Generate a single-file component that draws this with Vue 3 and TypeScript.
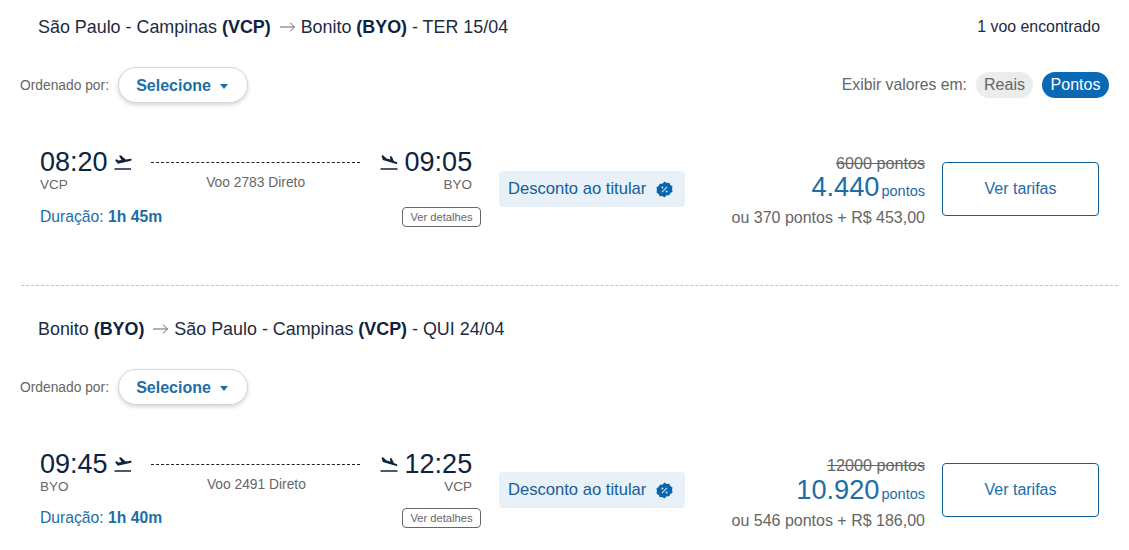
<script setup lang="ts">
interface Leg {
  from: string; fromCode: string; to: string; toCode: string; day: string;
  dep: string; arr: string; flight: string; dur: string;
  old: string; price: string; mix: string; found: boolean;
}
const legs: Leg[] = [
  { from: 'São Paulo - Campinas', fromCode: 'VCP', to: 'Bonito', toCode: 'BYO', day: 'TER 15/04', dep: '08:20', arr: '09:05', flight: 'Voo 2783 Direto', dur: '1h 45m', old: '6000 pontos', price: '4.440', mix: 'ou 370 pontos + R$ 453,00', found: true },
  { from: 'Bonito', fromCode: 'BYO', to: 'São Paulo - Campinas', toCode: 'VCP', day: 'QUI 24/04', dep: '09:45', arr: '12:25', flight: 'Voo 2491 Direto', dur: '1h 40m', old: '12000 pontos', price: '10.920', mix: 'ou 546 pontos + R$ 186,00', found: false },
]
</script>

<template>
  <main class="page">
    <template v-for="(l, i) in legs" :key="i">
      <hr v-if="i > 0" class="rule" />
      <section class="leg" :class="i === 0 ? 'leg-first' : 'leg-next'">
        <header class="head">
          <h2 class="title">
            {{ l.from }} <b>({{ l.fromCode }})</b>
            <svg class="arrow" viewBox="0 0 16 12" width="16" height="12"><path d="M0 6h14.500M10 1.500 14.500 6 10 10.500" fill="none" stroke="#5f6670" stroke-width="1"/></svg>
            {{ l.to }} <b>({{ l.toCode }})</b> - {{ l.day }}
          </h2>
          <span v-if="l.found" class="found">1 voo encontrado</span>
        </header>

        <div class="tools">
          <span class="sort-label">Ordenado por:</span>
          <button class="select">Selecione <i class="caret"></i></button>
          <div v-if="l.found" class="units">
            <span class="units-label">Exibir valores em:</span>
            <span class="pill pill-off">Reais</span>
            <span class="pill pill-on">Pontos</span>
          </div>
        </div>

        <div class="flight">
          <div class="route">
            <div class="times">
              <span class="time">{{ l.dep }}</span>
              <svg class="plane plane-dep" viewBox="0 0 18 15" width="18" height="15"><path d="M.5 14H17" stroke="#0d2340" stroke-width="1.500"/><path d="M1 5 2.500 4.300l2 1.300 3-.5L5 .7 6.800.3l4.900 4.200 3.800-.6c1.200-.2 2 .3 2.100.9.100.6-.5 1.100-1.600 1.300L3.800 8.700z" fill="#0d2340"/></svg>
              <span class="dash"></span>
              <svg class="plane plane-arr" viewBox="0 0 18 15" width="18" height="15"><path d="M.5 14H17.500" stroke="#0d2340" stroke-width="1.500"/><path d="M1.500.5 3 .2l3.600 3.400 3.800 1L10 1l1.800.5 2 4.600 2.500.9c.9.400 1.200 1 1 1.400-.2.500-.9.600-1.800.4L2.800 5z" fill="#0d2340"/></svg>
              <span class="time">{{ l.arr }}</span>
            </div>
            <div class="codes">
              <span>{{ l.fromCode }}</span>
              <span class="flight-no">{{ l.flight }}</span>
              <span>{{ l.toCode }}</span>
            </div>
            <div class="meta">
              <span class="dur">Duração: <b>{{ l.dur }}</b></span>
              <span class="details">Ver detalhes</span>
            </div>
          </div>

          <div class="discount">
            Desconto ao titular
            <svg class="seal" viewBox="0 0 18 18" width="17" height="17">
              <path d="M9 .5l2.300 1.500 2.700-.2 1.200 2.500 2.300 1.400-.5 2.800.5 2.800-2.300 1.400-1.200 2.500-2.700-.2L9 17.500 6.700 16l-2.700.2-1.200-2.500L.5 12.300 1 9.500.5 6.700l2.300-1.400L4 2.800l2.700.2z" fill="#0a64ad"/>
              <path d="M6.300 11.700l5.400-5.400" stroke="#cfe2f2" stroke-width="1.200"/>
              <circle cx="6.700" cy="6.900" r="1.100" fill="#cfe2f2"/><circle cx="11.300" cy="11.100" r="1.100" fill="#cfe2f2"/>
            </svg>
          </div>

          <div class="price">
            <s class="old">{{ l.old }}</s>
            <div class="now"><span class="amount">{{ l.price }}</span><span class="unit">pontos</span></div>
            <div class="mix">{{ l.mix }}</div>
          </div>

          <button class="fares">Ver tarifas</button>
        </div>
      </section>
    </template>
  </main>
</template>

<style>
body { margin: 0; background: #fff; }
</style>

<style scoped>
.page { width: 1129px; height: 550px; overflow: hidden; box-sizing: border-box; padding: 0 10px 0 20px; font-family: "Liberation Sans", Arial, sans-serif; color: #0d2340; }
.leg-first { height: 285px; box-sizing: border-box; padding-top: 16px; }
.leg-next { padding-top: 32px; }
.rule { height: 0; margin: 0 1px; border: 0; border-top: 1px dashed #c4c4c4; }
.head { display: flex; justify-content: space-between; align-items: center; height: 22px; padding: 0 19px 0 18px; }
.title { margin: 0; font-size: 17.900px; font-weight: 400; white-space: nowrap; color: #1c2b3f; }
.title b { color: #0d2340; }
.arrow { margin: 0 0 0 9px; vertical-align: -0.500px; }
.found { font-size: 15.900px; color: #1c2b3f; }
.tools { display: flex; align-items: center; height: 36px; margin-top: 29px; padding-right: 10px; }
.sort-label { font-size: 13.800px; color: #666; margin-right: 9px; }
.select { width: 130px; height: 36px; box-sizing: border-box; border: 1px solid #d4d6da; border-radius: 18px; background: #fff; box-shadow: 0 2px 4px rgba(0,0,0,.16); color: #1b6ea8; font: 700 16px "Liberation Sans", Arial, sans-serif; display: flex; align-items: center; justify-content: center; gap: 9px; padding: 2px 2px 0 0; }
.caret { width: 0; height: 0; border-left: 4px solid transparent; border-right: 4px solid transparent; border-top: 5px solid #1b6ea8; margin-top: 1px; }
.units { margin-left: auto; display: flex; align-items: center; }
.units-label { font-size: 15.750px; color: #666; margin-right: 9px; }
.pill { height: 26px; border-radius: 13px; display: flex; align-items: center; justify-content: center; font-size: 16px; }
.pill-off { width: 57px; background: #ececec; color: #666; margin-right: 9px; }
.pill-on { width: 67px; background: #0a69b4; color: #fff; }
.flight { display: flex; align-items: flex-start; margin-top: 45px; padding-left: 20px; }
.route { width: 441px; flex: none; margin-top: -1px; }
.times { display: flex; align-items: center; height: 30px; }
.time { font-size: 27px; color: #0d2340; line-height: 30px; }
.plane { flex: none; }
.plane-dep { margin-left: 6px; }
.plane-arr { margin-right: 7px; }
.dash { width: 209px; border-top: 1px dashed #222; margin: 0 20px 0 19px; }
.codes { display: flex; justify-content: space-between; font-size: 13.500px; color: #666; width: 432px; height: 16px; line-height: 16px; }
.flight-no { position: relative; top: -2px; font-size: 13.800px; }
.meta { display: flex; justify-content: space-between; align-items: center; margin-top: 14px; height: 20px; }
.leg-next .meta { margin-top: 13px; }
.dur { font-size: 15.700px; color: #1b6ea8; }
.details { box-sizing: border-box; width: 79px; height: 20px; border: 1px solid #666; border-radius: 4px; font-size: 11.200px; color: #666; display: flex; align-items: center; justify-content: center; }
.discount { flex: none; box-sizing: border-box; width: 186px; height: 36px; margin: 23px 0 0 18px; padding-left: 9px; background: #e9f1f8; border-radius: 4px; display: flex; align-items: center; font-size: 16.600px; color: #155d97; gap: 10px; }
.leg-next .discount { margin-top: 22px; }
.price { width: 240px; flex: none; text-align: right; display: flex; flex-direction: column; align-items: flex-end; }
.old { font-size: 16.200px; color: #666; line-height: 18px; margin-top: 6px; }
.now { display: flex; align-items: baseline; height: 30px; line-height: 30px; color: #1b6ea8; }
.leg-next .now { margin-top: 1px; }
.amount { font-size: 27.200px; }
.unit { font-size: 14.500px; margin-left: 2px; }
.mix { font-size: 16px; color: #666; line-height: 18px; margin-top: 7px; }
.fares { flex: none; box-sizing: border-box; width: 157px; height: 54px; margin: 14px 0 0 17px; background: #fff; border: 1px solid #0f5f93; border-radius: 4px; font: 400 16px "Liberation Sans", Arial, sans-serif; color: #1b6ea8; padding: 0; }
.leg-next .fares { margin-top: 13px; }
</style>
